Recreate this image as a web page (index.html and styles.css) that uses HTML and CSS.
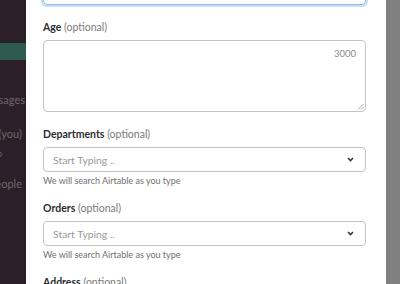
FILE: index.html
```html
<!DOCTYPE html>
<html>
<head>
<meta charset="utf-8">
<link rel="stylesheet" href="styles.css">
</head>
<body>
<div class="screen">
  <aside class="sidebar">
    <div class="side-item active"><span>Channels</span></div>
    <div class="side-item first"><span>Direct messages</span></div>
    <div class="side-item you"><span>slackbot (you)</span></div>
    <div class="side-item tiny"><span>o</span></div>
    <div class="side-item people"><span>Invite people</span></div>
  </aside>
  <main class="modal">
    <div class="field top-field">
      <div class="input focused"></div>
    </div>
    <div class="field area-field">
      <label class="label"><b>Age</b> <span>(optional)</span></label>
      <div class="textarea">
        <span class="count">3000</span>
        <svg class="grip" width="7" height="7" viewBox="0 0 7 7"><path d="M6.5 1 L1 6.5 M6.5 4 L4 6.5" stroke="#999" stroke-width="0.8" fill="none"/></svg>
      </div>
    </div>
    <div class="field">
      <label class="label"><b>Departments</b> <span>(optional)</span></label>
      <div class="input select">
        <span class="placeholder">Start Typing ..</span>
        <svg class="chev" width="7" height="5" viewBox="0 0 7 5"><path d="M1 1 L3.5 3.6 L6 1" stroke="#333" stroke-width="1.5" fill="none"/></svg>
      </div>
      <div class="help">We will search Airtable as you type</div>
    </div>
    <div class="field">
      <label class="label"><b>Orders</b> <span>(optional)</span></label>
      <div class="input select">
        <span class="placeholder">Start Typing ..</span>
        <svg class="chev" width="7" height="5" viewBox="0 0 7 5"><path d="M1 1 L3.5 3.6 L6 1" stroke="#333" stroke-width="1.5" fill="none"/></svg>
      </div>
      <div class="help">We will search Airtable as you type</div>
    </div>
    <div class="field">
      <label class="label"><b>Address</b> <span>(optional)</span></label>
    </div>
  </main>
  <div class="backdrop"></div>
</div>
</body>
</html>
```
FILE: styles.css
```css
* { box-sizing: border-box; }
html, body { margin: 0; padding: 0; }
body {
  width: 400px;
  height: 284px;
  overflow: hidden;
  font-family: Lato, "Open Sans", sans-serif;
  background: #808080;
}
.screen {
  display: flex;
  width: 400px;
  height: 284px;
  overflow: hidden;
}
.sidebar {
  width: 26px;
  flex: none;
  background: #2b2029;
  display: flex;
  flex-direction: column;
  padding-top: 43px;
  overflow: hidden;
  color: #6e6570;
  font-size: 11px;
}
.side-item {
  display: flex;
  justify-content: flex-end;
  white-space: nowrap;
  height: 20px;
  line-height: 20px;
  padding-right: 1px;
}
.side-item span { flex: none; }
.side-item.active {
  background: #2e5a50;
  height: 17px;
  color: transparent;
  margin-bottom: 30px;
}
.side-item.you { margin-top: 14px; padding-right: 4px; }
.side-item.tiny { font-size: 9px; justify-content: flex-start; }
.side-item.tiny span { margin-left: -3px; }
.side-item.people { margin-top: 10px; padding-right: 4px; }
.modal {
  width: 360px;
  flex: none;
  background: #fff;
  padding: 0 20px 0 17px;
  display: flex;
  flex-direction: column;
  overflow: hidden;
}
.backdrop {
  flex: 1;
  background: #808080;
}
.field {
  display: flex;
  flex-direction: column;
  margin-bottom: 12px;
}
.top-field { margin-top: -20px; margin-bottom: 14px; }
.area-field { margin-bottom: 14px; }
.label {
  font-size: 10.5px;
  line-height: 16px;
  color: #2c2d30;
  margin-bottom: 5px;
}
.label b { font-weight: 700; }
.label span { color: #7a7a7a; font-weight: 400; }
.input {
  height: 25px;
  border: 1px solid #c4c4c4;
  border-radius: 4px;
  display: flex;
  align-items: center;
  padding: 0 10px 0 9px;
}
.input.focused {
  border-color: #8ebfe9;
  box-shadow: 0 0 0 2px #c4def5;
}
.select { justify-content: space-between; }
.placeholder {
  font-size: 10.4px;
  color: #9a9a9a;
}
.chev { flex: none; margin-right: 1px; }
.textarea {
  position: relative;
  height: 72px;
  border: 1px solid #c4c4c4;
  border-radius: 4px;
  display: flex;
  justify-content: flex-end;
  align-items: flex-start;
  padding: 7px 9px 0 0;
}
.count {
  font-size: 9.5px;
  color: #8a8a8a;
  line-height: 12px;
}
.grip { position: absolute; right: 1px; bottom: 1px; }
.help {
  font-size: 9px;
  line-height: 14px;
  color: #707070;
  margin-top: 2px;
}
```
